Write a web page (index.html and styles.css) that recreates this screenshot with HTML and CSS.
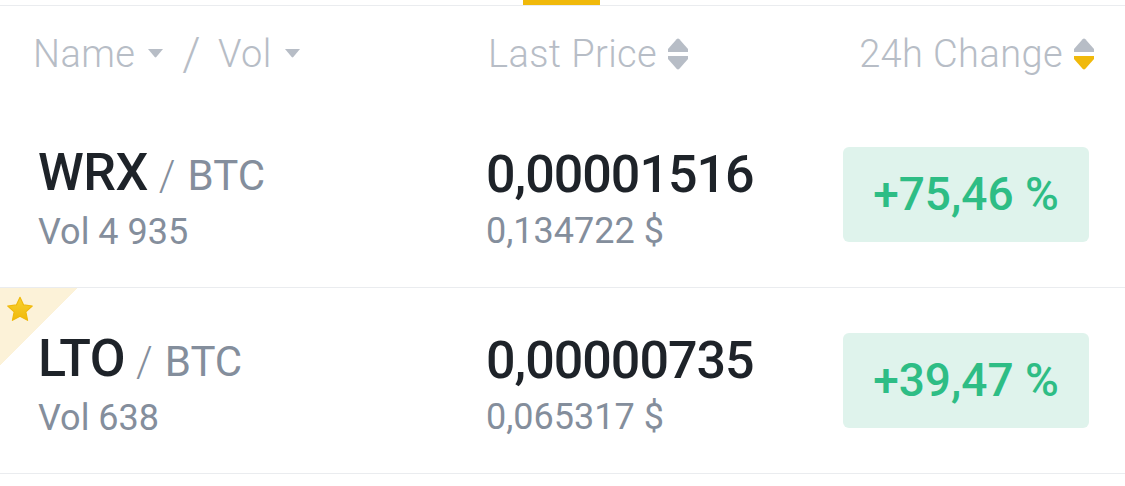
FILE: index.html
```html
<!DOCTYPE html>
<html lang="en">

<head>
    <meta charset="UTF-8">
    <meta name="viewport" content="width=device-width, initial-scale=1.0">
    <title>Markets</title>
    <link rel="stylesheet" href="styles.css">
</head>

<body>

    <div class="tabBar">
        <div class="tabIndicator"></div>
    </div>

    <div class="listHead">
        <div class="headCell">
            <span>Name</span>
            <svg class="caret" width="17" height="10" viewBox="0 0 17 10"><path d="M1 1 H16 L9.3 9 Q8.5 9.8 7.7 9 Z" fill="#b7bdc6"/></svg>
            <span class="slash">/</span>
            <span>Vol</span>
            <svg class="caret" width="17" height="10" viewBox="0 0 17 10"><path d="M1 1 H16 L9.3 9 Q8.5 9.8 7.7 9 Z" fill="#b7bdc6"/></svg>
        </div>
        <div class="headCell">
            <span>Last Price</span>
            <svg class="sort" width="20" height="32" viewBox="0 0 20 32">
                <path d="M8.6 1.2 Q10 -0.2 11.4 1.2 L20 11 V14 H0 V11 Z" fill="#b7bdc6"/>
                <path d="M0 18 H20 V21 L11.4 30.8 Q10 32.2 8.6 30.8 L0 21 Z" fill="#b7bdc6"/>
            </svg>
        </div>
        <div class="headCell">
            <span>24h Change</span>
            <svg class="sort" width="20" height="32" viewBox="0 0 20 32">
                <path d="M8.6 1.2 Q10 -0.2 11.4 1.2 L20 11 V14 H0 V11 Z" fill="#b7bdc6"/>
                <path d="M0 18 H20 V21 L11.4 30.8 Q10 32.2 8.6 30.8 L0 21 Z" fill="#f0b90b"/>
            </svg>
        </div>
    </div>

    <div class="pairRow">
        <div class="pairName">
            <div class="mainLine"><span class="base">WRX</span><span class="quote"><span class="quoteSlash">/</span>BTC</span></div>
            <div class="subLine">Vol 4 935</div>
        </div>
        <div class="pairPrice">
            <div class="mainLine price">0,00001516</div>
            <div class="subLine">0,134722 $</div>
        </div>
        <div class="changeBadge">+75,46 %</div>
    </div>

    <div class="pairRow">
        <div class="favCorner">
            <svg width="28" height="27" viewBox="0 0 24 23">
                <defs>
                    <linearGradient id="starFill" x1="0" y1="0" x2="0" y2="1">
                        <stop offset="0" stop-color="#f8d12f"/>
                        <stop offset="1" stop-color="#f0b90b"/>
                    </linearGradient>
                </defs>
                <path d="M12 1 L15.1 7.6 L22.5 8.5 L17 13.5 L18.5 20.8 L12 17.2 L5.5 20.8 L7 13.5 L1.5 8.5 L8.9 7.6 Z" fill="url(#starFill)" stroke="#f0b90b" stroke-width="1" stroke-linejoin="round"/>
            </svg>
        </div>
        <div class="pairName">
            <div class="mainLine"><span class="base">LTO</span><span class="quote"><span class="quoteSlash">/</span>BTC</span></div>
            <div class="subLine">Vol 638</div>
        </div>
        <div class="pairPrice">
            <div class="mainLine price">0,00000735</div>
            <div class="subLine">0,065317 $</div>
        </div>
        <div class="changeBadge">+39,47 %</div>
    </div>

</body>

</html>
```

FILE: styles.css
```css
body {
    margin: 0;
    background-color: #ffffff;
    font-family: Roboto, "Liberation Sans", sans-serif;
    color: #1e2329;
}

.tabBar {
    height: 5px;
    border-bottom: 1px solid #eaecef;
}

.tabIndicator {
    width: 77px;
    height: 5px;
    margin-left: 523px;
    background-color: #f0b90b;
}

.listHead {
    display: grid;
    grid-template-columns: 455px 1fr auto;
    align-items: center;
    height: 96px;
    padding: 0 31px 0 33px;
    font-size: 38px;
    font-weight: 300;
    letter-spacing: 0.4px;
    color: #b7bdc6;
}

.headCell {
    display: flex;
    align-items: center;
}

.caret {
    margin-left: 12px;
    margin-top: -2px;
}

.slash {
    font-size: 46px;
    margin: 0 17px 0 18px;
}

.sort {
    margin-left: 11px;
}

.pairRow {
    position: relative;
    display: grid;
    grid-template-columns: 448px 1fr auto;
    align-items: center;
    height: 185px;
    padding: 0 36px 0 38px;
    border-bottom: 1px solid #eaecef;
}

.pairName,
.pairPrice {
    padding-top: 8px;
}

.mainLine {
    font-size: 52px;
    line-height: 60px;
    white-space: nowrap;
}

.base {
    font-weight: 500;
    letter-spacing: -0.5px;
}

.quote {
    font-size: 42px;
    color: #848e9c;
}

.quoteSlash {
    font-weight: 300;
    margin: 0 12px 0 11px;
}

.price {
    font-weight: 500;
    letter-spacing: -1px;
}

.subLine {
    margin-top: 4px;
    font-size: 36px;
    line-height: 44px;
    color: #848e9c;
}

.changeBadge {
    width: 246px;
    height: 95px;
    line-height: 95px;
    border-radius: 6px;
    background-color: #dff3ec;
    color: #2ebd85;
    font-size: 46px;
    font-weight: 500;
    text-align: center;
}

.favCorner {
    position: absolute;
    left: 0;
    top: 0;
    width: 78px;
    height: 78px;
    background: linear-gradient(135deg, #fcf2d8 50%, transparent 50%);
}

.favCorner svg {
    position: absolute;
    left: 6px;
    top: 8px;
}
```
